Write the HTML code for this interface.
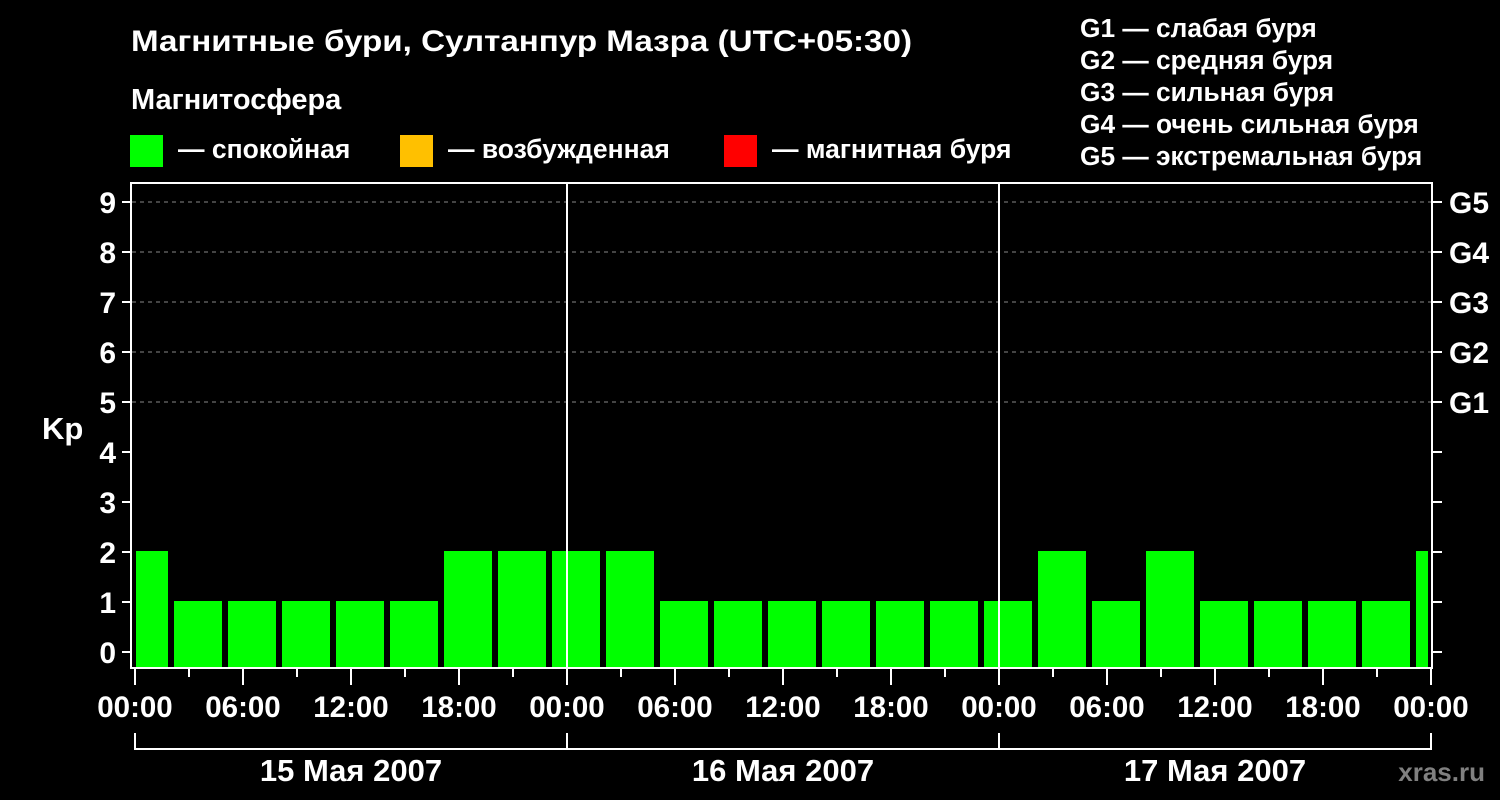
<!DOCTYPE html>
<html><head><meta charset="utf-8"><style>
html,body{margin:0;padding:0;background:#000;}
svg{display:block;}
text{font-family:"Liberation Sans",Arial,sans-serif;font-weight:bold;fill:#fff;}
</style></head><body>
<svg width="1500" height="800" viewBox="0 0 1500 800" xmlns="http://www.w3.org/2000/svg">
<rect width="1500" height="800" fill="#000"/>
<text x="131" y="51" font-size="30" textLength="781" lengthAdjust="spacingAndGlyphs">Магнитные бури, Султанпур Мазра (UTC+05:30)</text>
<text x="131" y="109" font-size="29">Магнитосфера</text>
<rect x="130" y="135" width="33" height="32" fill="#00ff00"/>
<text x="178" y="158" font-size="26.5">— спокойная</text>
<rect x="400" y="135" width="33" height="32" fill="#ffc000"/>
<text x="448" y="158" font-size="26.5">— возбужденная</text>
<rect x="724" y="135" width="33" height="32" fill="#ff0000"/>
<text x="772" y="158" font-size="26.5">— магнитная буря</text>
<g font-size="26.3">
<text x="1080" y="37">G1 — слабая буря</text>
<text x="1080" y="69">G2 — средняя буря</text>
<text x="1080" y="101">G3 — сильная буря</text>
<text x="1080" y="133">G4 — очень сильная буря</text>
<text x="1080" y="165">G5 — экстремальная буря</text>
</g>
<g stroke="#888" stroke-width="1" stroke-dasharray="4,4">
<line x1="132" y1="202" x2="1431" y2="202"/>
<line x1="132" y1="252" x2="1431" y2="252"/>
<line x1="132" y1="302" x2="1431" y2="302"/>
<line x1="132" y1="352" x2="1431" y2="352"/>
<line x1="132" y1="402" x2="1431" y2="402"/>
</g>
<g fill="#00ff00">
<rect x="136" y="551" width="32" height="117"/>
<rect x="174" y="601" width="48" height="67"/>
<rect x="228" y="601" width="48" height="67"/>
<rect x="282" y="601" width="48" height="67"/>
<rect x="336" y="601" width="48" height="67"/>
<rect x="390" y="601" width="48" height="67"/>
<rect x="444" y="551" width="48" height="117"/>
<rect x="498" y="551" width="48" height="117"/>
<rect x="552" y="551" width="48" height="117"/>
<rect x="606" y="551" width="48" height="117"/>
<rect x="660" y="601" width="48" height="67"/>
<rect x="714" y="601" width="48" height="67"/>
<rect x="768" y="601" width="48" height="67"/>
<rect x="822" y="601" width="48" height="67"/>
<rect x="876" y="601" width="48" height="67"/>
<rect x="930" y="601" width="48" height="67"/>
<rect x="984" y="601" width="48" height="67"/>
<rect x="1038" y="551" width="48" height="117"/>
<rect x="1092" y="601" width="48" height="67"/>
<rect x="1146" y="551" width="48" height="117"/>
<rect x="1200" y="601" width="48" height="67"/>
<rect x="1254" y="601" width="48" height="67"/>
<rect x="1308" y="601" width="48" height="67"/>
<rect x="1362" y="601" width="48" height="67"/>
<rect x="1416" y="551" width="12" height="117"/>
</g>
<g stroke="#fff" stroke-width="2" fill="none">
<rect x="131" y="183" width="1301" height="485"/>
</g>
<g stroke="#fff" stroke-width="2">
<line x1="567" y1="183" x2="567" y2="668"/>
<line x1="999" y1="183" x2="999" y2="668"/>
</g>
<g stroke="#fff" stroke-width="2">
<line x1="122" y1="652" x2="131" y2="652"/><line x1="1432" y1="652" x2="1442" y2="652"/>
<line x1="122" y1="602" x2="131" y2="602"/><line x1="1432" y1="602" x2="1442" y2="602"/>
<line x1="122" y1="552" x2="131" y2="552"/><line x1="1432" y1="552" x2="1442" y2="552"/>
<line x1="122" y1="502" x2="131" y2="502"/><line x1="1432" y1="502" x2="1442" y2="502"/>
<line x1="122" y1="452" x2="131" y2="452"/><line x1="1432" y1="452" x2="1442" y2="452"/>
<line x1="122" y1="402" x2="131" y2="402"/><line x1="1432" y1="402" x2="1442" y2="402"/>
<line x1="122" y1="352" x2="131" y2="352"/><line x1="1432" y1="352" x2="1442" y2="352"/>
<line x1="122" y1="302" x2="131" y2="302"/><line x1="1432" y1="302" x2="1442" y2="302"/>
<line x1="122" y1="252" x2="131" y2="252"/><line x1="1432" y1="252" x2="1442" y2="252"/>
<line x1="122" y1="202" x2="131" y2="202"/><line x1="1432" y1="202" x2="1442" y2="202"/>
</g>
<g font-size="30" text-anchor="end">
<text x="116" y="663">0</text><text x="116" y="613">1</text><text x="116" y="563">2</text>
<text x="116" y="513">3</text><text x="116" y="463">4</text><text x="116" y="413">5</text>
<text x="116" y="363">6</text><text x="116" y="313">7</text><text x="116" y="263">8</text>
<text x="116" y="213">9</text>
</g>
<text x="42" y="439" font-size="31">Kp</text>
<g font-size="30">
<text x="1449" y="413">G1</text><text x="1449" y="363">G2</text><text x="1449" y="313">G3</text>
<text x="1449" y="263">G4</text><text x="1449" y="213">G5</text>
</g>
<g stroke="#fff" stroke-width="2">
<line x1="135" y1="669" x2="135" y2="685"/><line x1="189" y1="669" x2="189" y2="677"/>
<line x1="243" y1="669" x2="243" y2="685"/><line x1="297" y1="669" x2="297" y2="677"/>
<line x1="351" y1="669" x2="351" y2="685"/><line x1="405" y1="669" x2="405" y2="677"/>
<line x1="459" y1="669" x2="459" y2="685"/><line x1="513" y1="669" x2="513" y2="677"/>
<line x1="567" y1="669" x2="567" y2="685"/><line x1="621" y1="669" x2="621" y2="677"/>
<line x1="675" y1="669" x2="675" y2="685"/><line x1="729" y1="669" x2="729" y2="677"/>
<line x1="783" y1="669" x2="783" y2="685"/><line x1="837" y1="669" x2="837" y2="677"/>
<line x1="891" y1="669" x2="891" y2="685"/><line x1="945" y1="669" x2="945" y2="677"/>
<line x1="999" y1="669" x2="999" y2="685"/><line x1="1053" y1="669" x2="1053" y2="677"/>
<line x1="1107" y1="669" x2="1107" y2="685"/><line x1="1161" y1="669" x2="1161" y2="677"/>
<line x1="1215" y1="669" x2="1215" y2="685"/><line x1="1269" y1="669" x2="1269" y2="677"/>
<line x1="1323" y1="669" x2="1323" y2="685"/><line x1="1377" y1="669" x2="1377" y2="677"/>
<line x1="1431" y1="669" x2="1431" y2="685"/>
</g>
<g font-size="29.5" text-anchor="middle">
<text x="135" y="717">00:00</text><text x="243" y="717">06:00</text><text x="351" y="717">12:00</text>
<text x="459" y="717">18:00</text><text x="567" y="717">00:00</text><text x="675" y="717">06:00</text>
<text x="783" y="717">12:00</text><text x="891" y="717">18:00</text><text x="999" y="717">00:00</text>
<text x="1107" y="717">06:00</text><text x="1215" y="717">12:00</text><text x="1323" y="717">18:00</text>
<text x="1431" y="717">00:00</text>
</g>
<g stroke="#fff" stroke-width="2" fill="none">
<line x1="135" y1="749" x2="1432" y2="749"/>
<line x1="135" y1="733" x2="135" y2="750"/>
<line x1="567" y1="733" x2="567" y2="750"/>
<line x1="999" y1="733" x2="999" y2="750"/>
<line x1="1431" y1="733" x2="1431" y2="750"/>
</g>
<g font-size="31" text-anchor="middle">
<text x="351" y="781">15 Мая 2007</text>
<text x="783" y="781">16 Мая 2007</text>
<text x="1215" y="781">17 Мая 2007</text>
</g>
<text x="1485" y="781" font-size="26" text-anchor="end" style="fill:#808080">xras.ru</text>
</svg>
</body></html>
